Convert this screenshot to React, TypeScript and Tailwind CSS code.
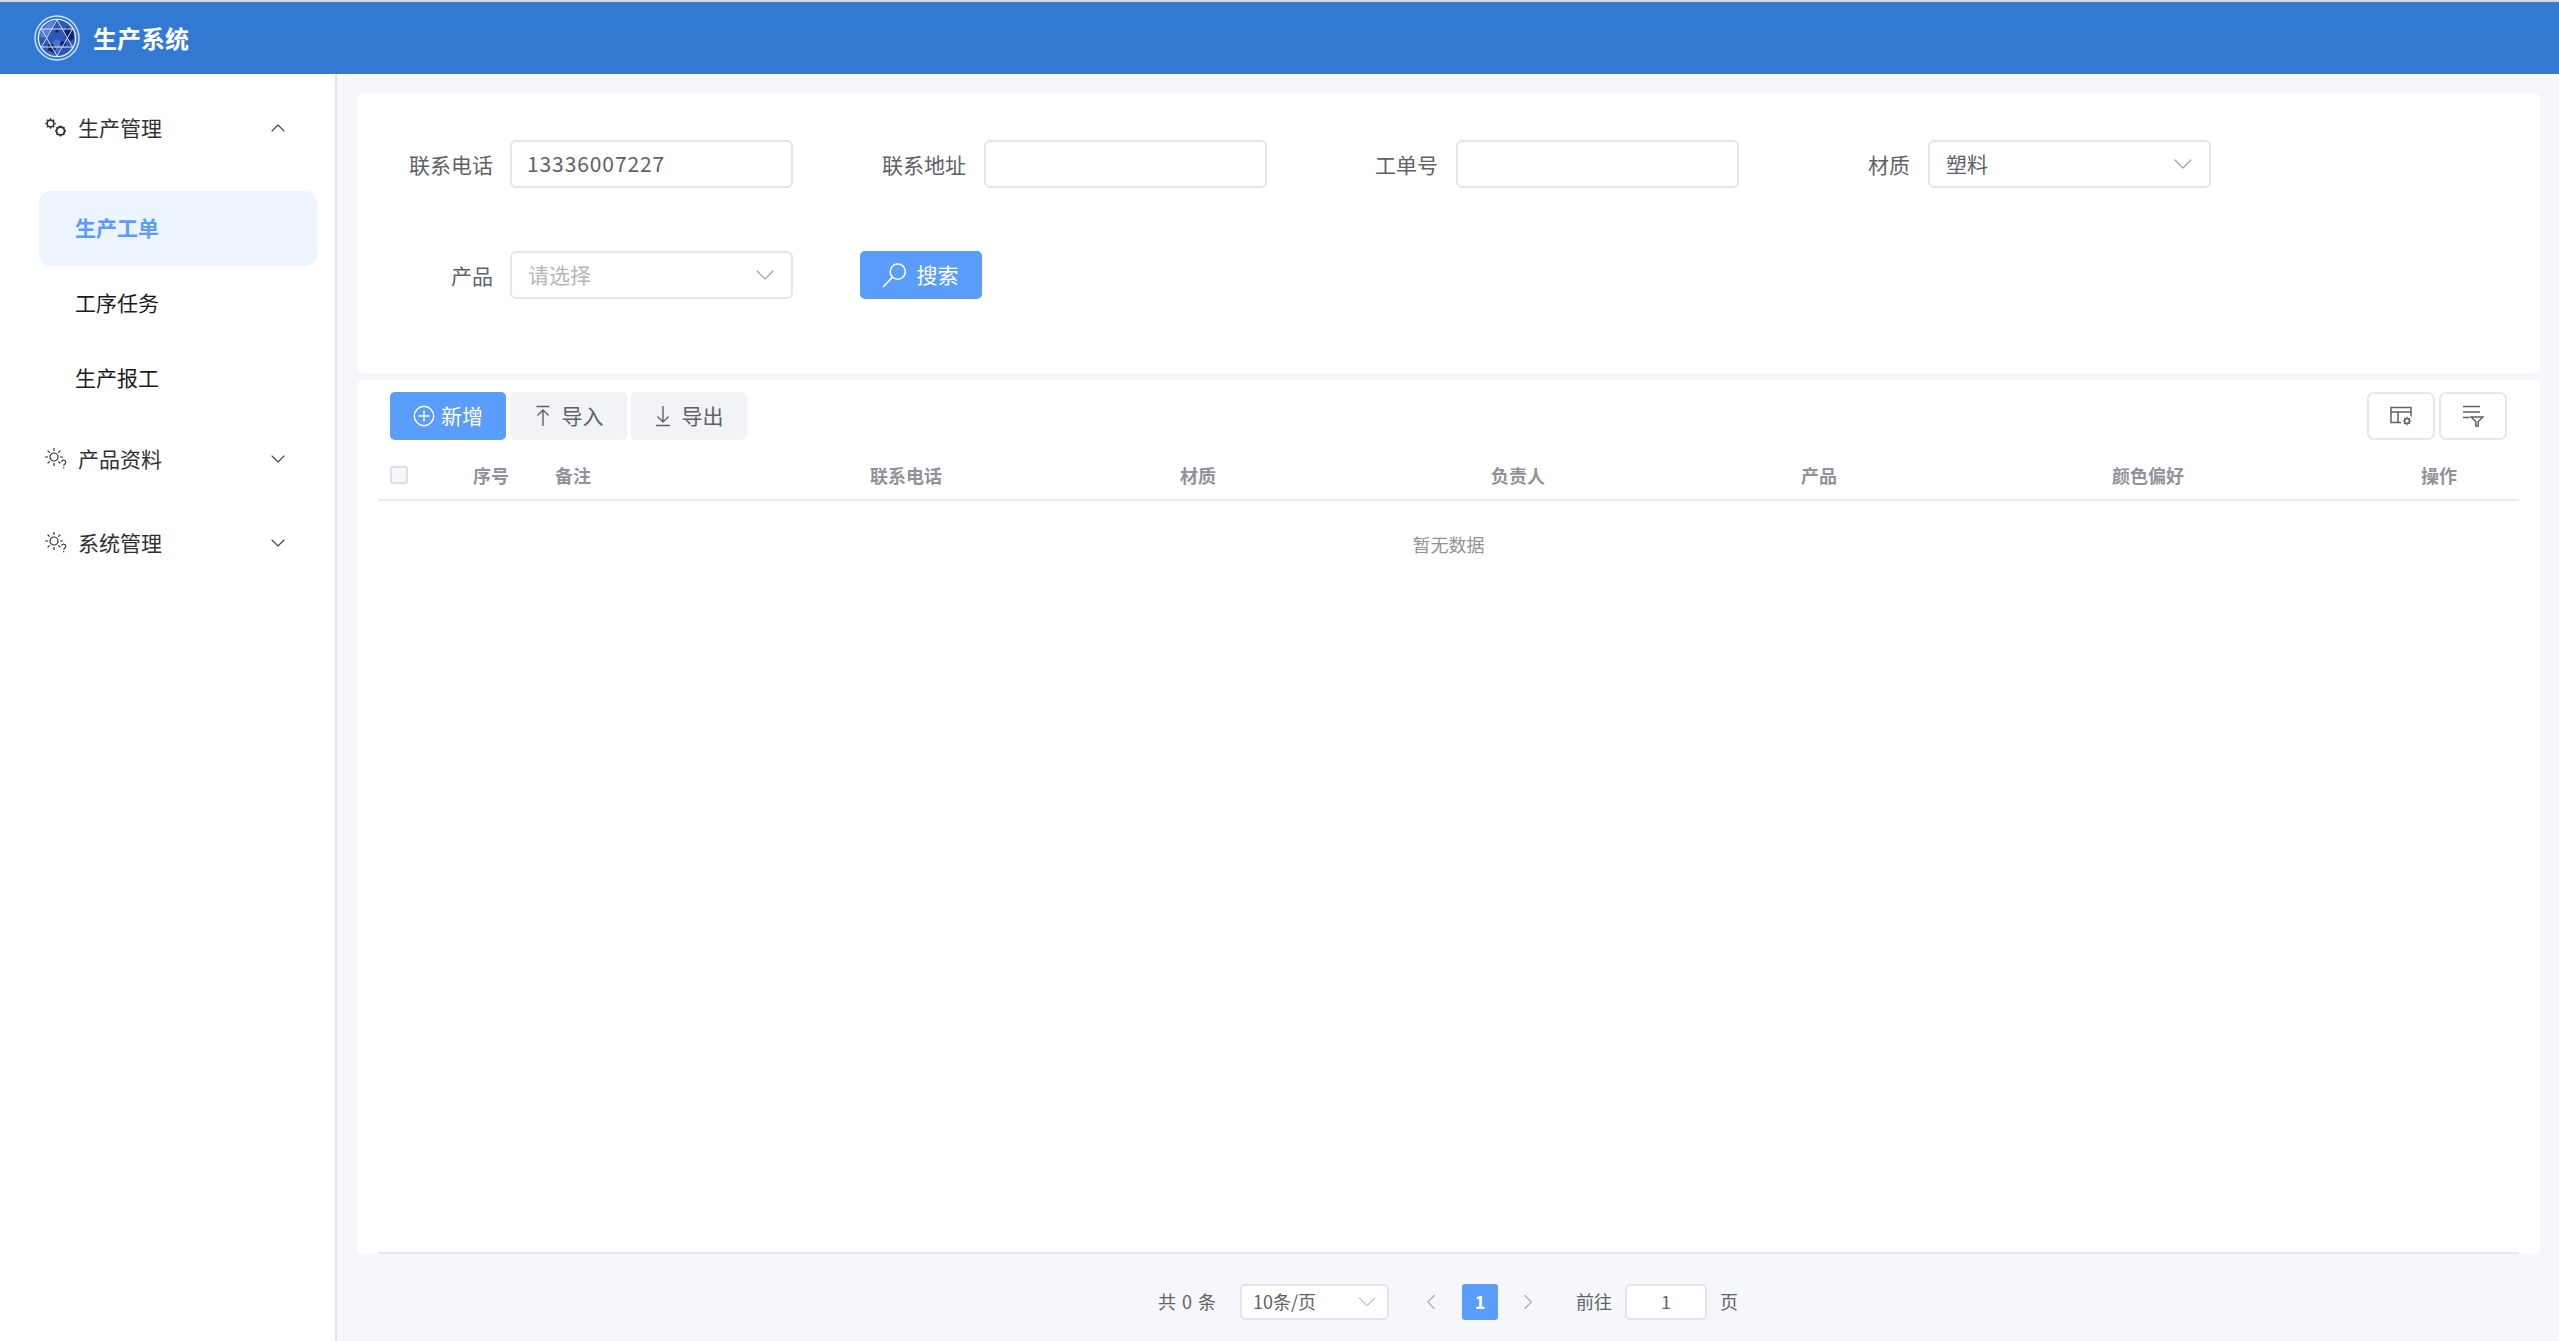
import { ChevronDown, ChevronUp, ChevronLeft, ChevronRight } from 'lucide-react';

const FONT = "font-['Noto_Sans_CJK_SC','Noto_Sans',sans-serif]";

function Logo() {
  return (
    <svg width="46" height="46" viewBox="0 0 46 46" className="shrink-0">
      <circle cx="23" cy="23" r="22" fill="none" stroke="#cfe2f7" strokeWidth="1.4" />
      <circle cx="23" cy="23" r="18.6" fill="#2c56b8" stroke="#e3effb" strokeWidth="1.4" />
      <path d="M6 17l8-9 7-3-3 9-6 8-5 1z" fill="#5a84da" />
      <path d="M22 24l6 3-4 9-8 3-3-6z" fill="#4a74cf" />
      <path d="M33 12l6 4 1 7-3 3-5-3-2-6zM14 30l4-2 4 6-3 4-5-3zM27 26l5 1-1 5-5-2zM22 14l3 1-1 3-3-1z" fill="#10235f" />
      <path d="M23 5L38.6 32H7.4zM23 41L7.4 14h31.2z" fill="none" stroke="#cfe2f7" strokeWidth="1" />
    </svg>
  );
}

function GearsIcon() {
  return (
    <svg width="24" height="24" viewBox="0 0 24 24" fill="none" stroke="#303133" className="shrink-0">
      <circle cx="6.500" cy="7.500" r="3.400" strokeWidth="1.600" />
      <circle cx="16.500" cy="15" r="4" strokeWidth="1.800" />
      <path d="M6.500 2.200v1.400M6.500 11.400v1.400M1.200 7.500h1.400M10.400 7.500h1.400M2.800 3.800l1 1M9.200 10.200l1 1M2.800 11.200l1-1M9.200 4.800l1-1" strokeWidth="1.400" />
      <path d="M16.500 9.400v1.500M16.500 19.100v1.500M10.900 15h1.500M20.600 15h1.500M12.600 11.100l1 1M19.400 17.900l1 1M12.600 18.900l1-1M19.400 12.100l1-1" strokeWidth="1.500" />
    </svg>
  );
}

function SunIcon() {
  return (
    <svg width="24" height="24" viewBox="0 0 24 24" fill="none" stroke="#303133" strokeWidth="1.200" className="shrink-0">
      <circle cx="10" cy="10" r="4" />
      <path d="M10 1v3M10 16v3M1 10h3M16 10h3M3.600 3.600l2.100 2.100M14.300 14.300l2.100 2.100M3.600 16.400l2.100-2.100M14.300 5.700l2.100-2.100" />
      <path d="M17.500 14.500a2.300 2.300 0 0 1 4.400.8c0 1.600-2.200 1.800-2.200 3.400M19.700 20v1.200" strokeWidth="1.100" />
    </svg>
  );
}

function SearchIcon() {
  return (
    <svg width="25" height="25" viewBox="0 0 23 23" fill="none" stroke="#fff" strokeWidth="1.400" className="shrink-0">
      <circle cx="14.500" cy="8" r="7" />
      <path d="M9.500 13.200L1 22" />
    </svg>
  );
}

function PlusCircleIcon() {
  return (
    <svg width="22" height="22" viewBox="0 0 22 22" fill="none" stroke="#fff" strokeWidth="1.400" className="shrink-0">
      <circle cx="11" cy="11" r="9.700" />
      <path d="M11 5.500v11M5.500 11h11" />
    </svg>
  );
}

function ImportIcon() {
  return (
    <svg width="16" height="22" viewBox="0 0 16 22" fill="none" stroke="#606266" strokeWidth="1.400" className="shrink-0">
      <path d="M1.500 1.500h13M8 21V5M2.500 10.500L8 5l5.500 5.500" />
    </svg>
  );
}

function ExportIcon() {
  return (
    <svg width="16" height="22" viewBox="0 0 16 22" fill="none" stroke="#606266" strokeWidth="1.400" className="shrink-0">
      <path d="M1 20.500h14M8 1v16M2.500 11.500L8 17l5.500-5.500" />
    </svg>
  );
}

function TableSetIcon() {
  return (
    <svg width="22" height="20" viewBox="0 0 22 20" fill="none" stroke="#606266" className="shrink-0">
      <path d="M11 16.500H1V1.500h20v9" strokeWidth="1.500" />
      <path d="M1 6h20M8 6v10.500" strokeWidth="1.500" />
      <circle cx="17" cy="15" r="2.400" strokeWidth="1.500" />
      <path d="M17 10.800v1.200M17 18v1.200M12.800 15H14M20 15h1.200M14 12l.9.9M19.100 17.100l.9.9M14 18l.9-.9M19.100 12.900l.9-.9" strokeWidth="1.200" />
    </svg>
  );
}

function FilterLinesIcon() {
  return (
    <svg width="22" height="22" viewBox="0 0 22 22" fill="none" stroke="#606266" strokeWidth="1.500" className="shrink-0">
      <path d="M1 1.500h17M1 7h17M1 12.500h6.500" />
      <path d="M9 12h12l-4.800 4.500V21h-2.400v-4.500z" />
    </svg>
  );
}

function Field({ label, children, gap }: { label: string; children: React.ReactNode; gap: string }) {
  return (
    <div className={`flex items-center justify-end ${gap}`}>
      <span className="text-[21px] leading-[48px] text-[#606266] whitespace-nowrap">{label}</span>
      {children}
    </div>
  );
}

function TextBox({ value }: { value?: string }) {
  return (
    <div className="flex h-[48px] w-[283px] items-center rounded-[6px] border-2 border-[#e3e5e9] bg-white pl-[15px]">
      <span className="text-[21px] text-[#606266] tracking-[0.9px]">{value}</span>
    </div>
  );
}

function SelectBox({ value, placeholder }: { value?: string; placeholder?: string }) {
  return (
    <div className="flex h-[48px] w-[283px] items-center justify-between rounded-[6px] border-2 border-[#e3e5e9] bg-white pl-[16px] pr-[10px]">
      <span className={`text-[21px] ${placeholder ? 'text-[#b4b6bb]' : 'text-[#606266]'}`}>{value ?? placeholder}</span>
      <ChevronDown size={32} strokeWidth={0.8} className="text-[#9a9da4]" />
    </div>
  );
}

function SubItem({ label, active }: { label: string; active?: boolean }) {
  return (
    <div
      className={`ml-[39px] mr-[18px] flex h-[75px] items-center rounded-[12px] pb-[2px] pl-[36px] text-[21px] ${
        active ? 'bg-[#ecf4fe] font-bold text-[#5a9dfb]' : 'text-[#1b1b1b]'
      }`}
    >
      {label}
    </div>
  );
}

function MenuHead({ label, icon, open }: { label: string; icon: React.ReactNode; open?: boolean }) {
  return (
    <div className="flex h-[84px] items-center pl-[44px] pr-[45px] text-[21px] text-[#303133]">
      {icon}
      <span className="ml-[10px] flex-1">{label}</span>
      {open ? (
        <ChevronUp size={24} strokeWidth={1.1} className="text-[#404246]" />
      ) : (
        <ChevronDown size={24} strokeWidth={1.1} className="text-[#404246]" />
      )}
    </div>
  );
}

const COLUMNS = ['序号', '备注', '联系电话', '材质', '负责人', '产品', '颜色偏好', '操作'];

export default function App() {
  return (
    <div className={`flex h-[1341px] w-[2559px] flex-col overflow-hidden bg-[#f5f7fa] ${FONT}`}>
      <div className="flex h-[74px] shrink-0 items-center border-t-2 border-[#d9dadc] bg-[#3279d3] pl-[34px]">
        <Logo />
        <span className="ml-[13px] text-[24px] font-bold text-white">生产系统</span>
      </div>

      <div className="flex min-h-0 flex-1">
        {/* sidebar */}
        <div className="w-[337px] shrink-0 border-r-2 border-[#e1e3e7] bg-white pt-[12px]">
          <MenuHead label="生产管理" icon={<GearsIcon />} open />
          <div className="pb-px pt-[21px]">
            <SubItem label="生产工单" active />
            <SubItem label="工序任务" />
            <SubItem label="生产报工" />
          </div>
          <MenuHead label="产品资料" icon={<SunIcon />} />
          <MenuHead label="系统管理" icon={<SunIcon />} />
        </div>

        {/* main */}
        <div className="flex min-w-0 flex-1 flex-col pl-[20px] pr-[19px] pt-[19px]">
          <div className="h-[280px] shrink-0 rounded-[6px] bg-white pt-[47px]">
            <div className="grid grid-cols-[436px_474px_472px_472px] justify-start gap-y-[63px]">
              <Field label="联系电话" gap="gap-[17px]">
                <TextBox value="13336007227" />
              </Field>
              <Field label="联系地址" gap="gap-[18px]">
                <TextBox />
              </Field>
              <Field label="工单号" gap="gap-[18px]">
                <TextBox />
              </Field>
              <Field label="材质" gap="gap-[18px]">
                <SelectBox value="塑料" />
              </Field>
              <Field label="产品" gap="gap-[17px]">
                <SelectBox placeholder="请选择" />
              </Field>
              <div className="pl-[67px]">
                <button className="flex h-[48px] w-[122px] items-center justify-center gap-[10px] rounded-[5px] bg-[#5a9dfb] pr-[2px] text-[21px] text-white">
                  <SearchIcon />
                  搜索
                </button>
              </div>
            </div>
          </div>

          <div className="mt-[7px] h-[874px] shrink-0 rounded-t-[6px] bg-white px-[21px] pt-[12px]">
            <div className="flex h-full flex-col border-b-2 border-[#e6e8eb]">
              <div className="flex items-center pl-[12px] pr-[12px]">
                <button className="flex h-[48px] w-[116px] items-center justify-center gap-[6px] rounded-[5px] bg-[#5a9dfb] text-[21px] text-white">
                  <PlusCircleIcon />
                  新增
                </button>
                <button className="ml-[5px] flex h-[48px] w-[116px] items-center justify-center gap-[11px] rounded-[5px] bg-[#f1f3f6] text-[21px] text-[#606266]">
                  <ImportIcon />
                  导入
                </button>
                <button className="ml-[4px] flex h-[48px] w-[116px] items-center justify-center gap-[11px] rounded-[5px] bg-[#f1f3f6] text-[21px] text-[#606266]">
                  <ExportIcon />
                  导出
                </button>
                <div className="ml-auto flex gap-[4px]">
                  <button className="flex h-[48px] w-[68px] items-center justify-center rounded-[7px] border-2 border-[#e6e8eb] bg-white">
                    <TableSetIcon />
                  </button>
                  <button className="flex h-[48px] w-[68px] items-center justify-center rounded-[7px] border-2 border-[#e6e8eb] bg-white">
                    <FilterLinesIcon />
                  </button>
                </div>
              </div>

              <div className="mt-[11px] grid h-[50px] grid-cols-[95px_82px_315px_310px_311px_310px_311px_309px_1fr] items-center border-b-2 border-[#e9ebee] text-[18px] font-bold text-[#909399]">
                <div className="pl-[12px]">
                  <div className="h-[18px] w-[18px] rounded-[3px] border-2 border-[#dcdfe6] bg-[#f5f7fa]" />
                </div>
                {COLUMNS.map((c) => (
                  <div key={c}>{c}</div>
                ))}
              </div>

              <div className="flex h-[86px] items-center justify-center text-[18px] text-[#909399]">暂无数据</div>
            </div>
          </div>

          <div className="flex flex-1 items-center justify-center pr-[1px] pt-[8px] text-[18px] text-[#606266]">
            <span className="[word-spacing:2px]">共 0 条</span>
            <div className="ml-[24px] flex h-[36px] w-[149px] items-center justify-between rounded-[5px] border-2 border-[#e3e5e9] bg-white pl-[11px] pr-[5px]">
              <span>10条/页</span>
              <ChevronDown size={30} strokeWidth={0.8} className="text-[#9a9da4]" />
            </div>
            <ChevronLeft size={26} strokeWidth={1} className="ml-[29px] text-[#a8abb2]" />
            <div className="ml-[18px] flex h-[36px] w-[36px] items-center justify-center rounded-[3px] bg-[#5a9dfb] font-bold text-white">1</div>
            <ChevronRight size={26} strokeWidth={1} className="ml-[17px] text-[#a8abb2]" />
            <span className="ml-[35px]">前往</span>
            <div className="ml-[13px] flex h-[36px] w-[82px] items-center justify-center rounded-[5px] border-2 border-[#e3e5e9] bg-white">1</div>
            <span className="ml-[13px]">页</span>
          </div>
        </div>
      </div>
    </div>
  );
}
